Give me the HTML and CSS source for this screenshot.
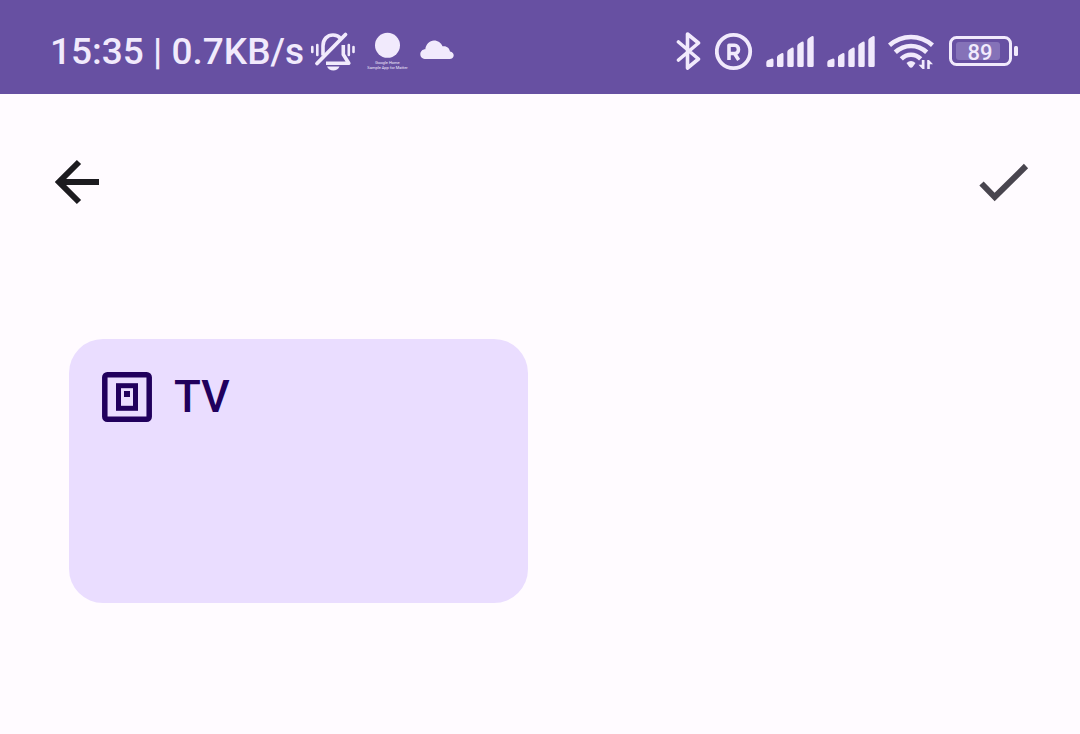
FILE: index.html
```
<!DOCTYPE html>
<html lang="en">
<head>
<meta charset="utf-8">
<meta name="viewport" content="width=device-width, initial-scale=1">
<title>Devices</title>
<link rel="stylesheet" href="styles.css">
</head>
<body>
<header class="status">
  <div class="status-left">
    <span class="clock">15:35 | 0.7KB/s</span>
    <svg class="line" width="46" height="42" viewBox="308 31 46 42" aria-label="Silent">
      <path stroke-width="2.6" stroke-linecap="round" d="M310.3 47v5M315.300 45v10M346.800 45v10M351.500 47v5"/>
      <path stroke-width="3.6" d="M321 55.500V46C321 39 325.500 35 331 35C334.500 35 336.800 36.300 338.500 38.500"/>
      <path stroke-width="3.6" stroke-linejoin="round" d="M341.300 45V54.500L346.800 63.300H324"/>
      <path stroke-width="3.8" stroke-linecap="round" d="M315 63.500L343.500 34.500"/>
      <path class="solid" d="M325 66.500h12.500c-1 2.500-3.500 4-6.200 4s-5.300-1.500-6.300-4z"/>
    </svg>
    <svg class="app" width="46" height="42" viewBox="362 31 46 42">
      <circle cx="385.500" cy="45.300" r="12.500"/>
      <text x="385.500" y="64" text-anchor="middle">Google Home</text>
      <text x="385.500" y="68.500" text-anchor="middle">Sample App for Matter</text>
    </svg>
    <svg class="solid" width="34" height="42" viewBox="419 31 34 42" aria-label="Cloud">
      <path d="M425 59C421.500 59 419.300 57 419.300 54.200C419.300 51.200 421.500 49.300 424.300 49.200C425 44 428.500 40.500 433 40.500C437 40.500 440 42.700 441.500 46.300C445.500 45.500 448.500 48 449 51.500C451.500 52 452.700 53.500 452.700 55.300C452.700 57.500 451 59 448.500 59Z"/>
    </svg>
  </div>
  <div class="status-right">
    <svg class="line" width="26" height="42" viewBox="676 31 26 42" aria-label="Bluetooth">
      <path stroke-width="3.600" stroke-linejoin="round" stroke-linecap="round" d="M678.500 42L698.500 59L687.500 68V34L698.500 43L678.500 60"/>
    </svg>
    <svg class="line" width="38" height="42" viewBox="716 31 38 42" aria-label="Registered">
      <circle cx="734.500" cy="51.500" r="16.700" stroke-width="3.800"/>
      <path stroke-width="3.600" stroke-linejoin="round" d="M730 60V45.300H735.500C740.800 45.300 740.800 53.500 735.500 53.500H730M735.500 53.500L739.700 60"/>
    </svg>
    <svg class="solid" width="48" height="42" viewBox="767 31 48 42" aria-label="Signal 1">
      <path id="bars" d="M767.300 62.500Q767.300 61 768.500 60.300L773 58.500Q774.500 58.300 774.500 60V65.500Q774.500 67 773 67H768.800Q767.300 67 767.300 65.500ZM778 57.500Q778 56 779.200 55.200L782.500 53.300Q784.500 52.500 784.500 54.500V65.500Q784.500 67 783 67H779.500Q778 67 778 65.500ZM788.300 52Q788.300 50.500 789.500 49.700L792.700 47.800Q794.700 47 794.700 49V65.500Q794.700 67 793.200 67H789.800Q788.300 67 788.300 65.500ZM798.300 46Q798.300 44.500 799.500 43.700L802.700 41.800Q804.700 41 804.700 43V65.500Q804.700 67 803.200 67H799.800Q798.300 67 798.300 65.500ZM808.300 40.500Q808.300 39 809.500 38.200L812.700 36.300Q814.700 35.500 814.700 37.500V65.500Q814.700 67 813.200 67H809.800Q808.300 67 808.300 65.500Z"/>
    </svg>
    <svg class="solid" width="48" height="42" viewBox="767 31 48 42" aria-label="Signal 2"><use href="#bars"/></svg>
    <svg class="line wifi" width="46" height="42" viewBox="888 31 46 42" aria-label="Wi-Fi">
      <path stroke-width="4.600" d="M889.500 45.300Q899 37 911 37T932.500 45.300M895.300 52.300Q902 46 911 46T926.700 52.300M901.300 58.800Q905.500 54.700 911 54.700T920.700 58.800"/>
      <path class="solid" d="M906.500 63Q911 58.800 915.500 63L913 66.500Q911 69 909 66.500Z"/>
      <path class="solid" d="M921.800 60H924.500V69H922.500L918.500 64.800H921.800ZM927.200 69V60H929L933 64.300H929.800V69Z"/>
    </svg>
    <svg class="line" width="70" height="42" viewBox="949 31 70 42" aria-label="Battery 89%">
      <rect x="950.500" y="37.500" width="60" height="27" rx="6" stroke-width="3"/>
      <rect class="level" x="956" y="42" width="44" height="18" rx="3"/>
      <rect class="solid" x="1014" y="46" width="4" height="10" rx="1.500"/>
      <text class="charge" x="980" y="60" text-anchor="middle">89</text>
    </svg>
  </div>
</header>
<nav class="toolbar">
  <button class="icon-button" type="button" aria-label="Back">
    <svg width="46" height="46" viewBox="54 159 46 46"><path class="back" d="M99 182H59M79 162L59 182L79 202"/></svg>
  </button>
  <button class="icon-button" type="button" aria-label="Done">
    <svg width="50" height="46" viewBox="979 159 50 46"><path class="done" d="M981.500 183.500L994.700 197L1026 166"/></svg>
  </button>
</nav>
<main class="devices">
  <button class="card" type="button">
    <svg width="50" height="50" viewBox="102 372 50 50">
      <rect x="104.800" y="374.800" width="44.400" height="44.400" rx="2.500" stroke-width="5.500"/>
      <rect x="118.500" y="385.700" width="17" height="22.600" stroke-width="5"/>
      <rect class="dot" x="124" y="391" width="6" height="6"/>
    </svg>
    <span>TV</span>
  </button>
</main>
</body>
</html>
```
FILE: styles.css
```
* {
  box-sizing: border-box;
}

body {
  margin: 0;
  background: #fffbff;
  color: #1c1b1f;
  font-family: Roboto, "Liberation Sans", sans-serif;
}

svg {
  display: block;
  flex: none;
}

.status {
  display: flex;
  justify-content: space-between;
  align-items: center;
  height: 94px;
  padding: 10px 61px 0 50px;
  background: #6750a2;
  color: #f1eafc;
}

.status-left,
.status-right {
  display: flex;
  align-items: center;
}

.status-left {
  gap: 6px;
}

.status-right {
  gap: 13px;
}

.clock {
  font-size: 37px;
  font-weight: 500;
  line-height: 44px;
  white-space: nowrap;
}

.line {
  fill: none;
  stroke: #f1eafc;
}

.solid {
  fill: #f1eafc;
  stroke: none;
}

.app {
  margin: 0 4px 0 2px;
  fill: #f1eafc;
  font-size: 4px;
}

.wifi {
  margin-right: 2px;
}

.charge {
  fill: #f1eafc;
  stroke: none;
  font-size: 22px;
  font-weight: 500;
}

.level {
  fill: #8572b8;
  stroke: none;
}

.toolbar {
  display: flex;
  justify-content: space-between;
  align-items: center;
  height: 176px;
  padding: 0 51px 0 54px;
}

.icon-button {
  padding: 0;
  border: 0;
  background: none;
}

.back,
.done {
  fill: none;
  stroke-width: 6px;
}

.back {
  stroke: #1c1b1f;
}

.done {
  stroke: #49454f;
}

.devices {
  display: grid;
  grid-template-columns: 1fr 1fr;
  gap: 24px;
  padding: 69px;
}

.card {
  display: flex;
  align-items: flex-start;
  gap: 22px;
  min-height: 264px;
  padding: 33px;
  border: 0;
  border-radius: 34px;
  background: #eaddff;
  color: #21005d;
  font-family: inherit;
  font-size: 44px;
  font-weight: 500;
  line-height: 50px;
}

.card svg {
  fill: none;
  stroke: #21005d;
}

.card .dot {
  fill: #21005d;
  stroke: none;
}
```
